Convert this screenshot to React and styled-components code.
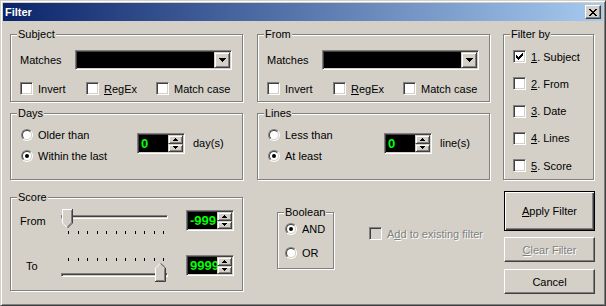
import React from "react";
import styled, { createGlobalStyle } from "styled-components";

const GlobalStyle = createGlobalStyle`
  html, body {
    margin: 0;
    padding: 0;
    background: #d4d0c8;
  }
  body {
    font-family: "Liberation Sans", Arial, sans-serif;
    font-size: 11px;
    color: #000;
  }
  * {
    box-sizing: border-box;
  }
`;

const Window = styled.div`
  width: 606px;
  height: 306px;
  background: #d4d0c8;
  border: 1px solid;
  border-color: #d4d0c8 #404040 #404040 #d4d0c8;
  box-shadow: inset 1px 1px 0 #fff, inset -1px -1px 0 #808080;
  padding: 2px;
  display: flex;
  flex-direction: column;
`;

const TitleBar = styled.div`
  height: 18px;
  flex: none;
  background: linear-gradient(to right, #0a246a, #a6caf0);
  display: flex;
  align-items: center;
  justify-content: space-between;
  padding: 0 2px;
`;

const Title = styled.span`
  color: #fff;
  font-weight: bold;
  line-height: 13px;
`;

const CloseButton = styled.div`
  width: 16px;
  height: 14px;
  background: #d4d0c8;
  border: 1px solid;
  border-color: #fff #404040 #404040 #fff;
  box-shadow: inset -1px -1px 0 #808080;
  display: flex;
  align-items: center;
  justify-content: center;
`;

const Body = styled.div`
  padding: 13px 8px 0 7px;
  display: flex;
  flex-direction: column;
`;

const TopGrid = styled.div`
  display: grid;
  grid-template-columns: 233px 14px 233px 13px 91px;
  grid-template-rows: 68px 67px;
  row-gap: 11px;
`;

const Group = styled.div`
  position: relative;
  border: 1px solid #808080;
  box-shadow: 1px 1px 0 #fff, inset 1px 1px 0 #fff;
  grid-column: ${(p) => p.$col || "auto"};
  grid-row: ${(p) => p.$row || "auto"};
  width: ${(p) => (p.$w ? `${p.$w}px` : "auto")};
  height: ${(p) => (p.$h ? `${p.$h}px` : "auto")};
  margin: ${(p) => p.$m || "0"};
  padding: ${(p) => p.$pad || "0"};
  flex: none;
`;

const GroupTitle = styled.span`
  position: absolute;
  top: -7px;
  left: 6px;
  padding: 0 1px;
  line-height: 13px;
  background: #d4d0c8;
  white-space: nowrap;
`;

const Row = styled.div`
  display: flex;
  align-items: ${(p) => p.$align || "center"};
  height: ${(p) => (p.$h ? `${p.$h}px` : "auto")};
  margin-top: ${(p) => p.$mt || 0}px;
`;

const Label = styled.span`
  width: ${(p) => p.$w}px;
  padding-left: ${(p) => p.$pl || 0}px;
  margin-top: ${(p) => p.$mt || 0}px;
  line-height: 13px;
  flex: none;
  white-space: nowrap;
`;

const Combo = styled.div`
  width: 157px;
  height: 20px;
  border: 1px solid;
  border-color: #808080 #fff #fff #808080;
  box-shadow: inset 1px 1px 0 #404040, inset -1px -1px 0 #d4d0c8;
  background: #000;
  padding: 1px;
  display: flex;
  justify-content: flex-end;
`;

const RaisedButton = styled.div`
  background: #d4d0c8;
  border: 1px solid;
  border-color: #d4d0c8 #404040 #404040 #d4d0c8;
  box-shadow: inset 1px 1px 0 #fff, inset -1px -1px 0 #808080;
  display: flex;
  align-items: center;
  justify-content: center;
`;

const DropButton = styled(RaisedButton)`
  width: 16px;
  height: 16px;
`;

const Item = styled.label`
  display: flex;
  align-items: center;
  gap: 5px;
  width: ${(p) => (p.$w ? `${p.$w}px` : "auto")};
  height: ${(p) => p.$h || 13}px;
  flex: none;
  white-space: nowrap;
  color: ${(p) => (p.$disabled ? "#808080" : "#000")};
  text-shadow: ${(p) => (p.$disabled ? "1px 1px 0 #fff" : "none")};
`;

const Box = styled.span`
  width: 13px;
  height: 13px;
  flex: none;
  border: 1px solid;
  border-color: #808080 #fff #fff #808080;
  box-shadow: inset 1px 1px 0 #404040, inset -1px -1px 0 #d4d0c8;
  background: ${(p) => (p.$disabled ? "#d4d0c8" : "#fff")};
  display: flex;
  align-items: center;
  justify-content: center;
`;

const RadioOuter = styled.span`
  width: 12px;
  height: 12px;
  flex: none;
  border-radius: 50%;
  border: 1px solid;
  border-color: #808080 #fff #fff #808080;
  display: flex;
`;

const RadioInner = styled.span`
  flex: 1;
  border-radius: 50%;
  border: 1px solid;
  border-color: #404040 #d4d0c8 #d4d0c8 #404040;
  background: #fff;
  display: flex;
  align-items: center;
  justify-content: center;
`;

const Dot = styled.span`
  width: 4px;
  height: 4px;
  border-radius: 50%;
  background: #000;
`;

const Column = styled.div`
  display: flex;
  flex-direction: column;
  width: ${(p) => (p.$w ? `${p.$w}px` : "auto")};
  gap: ${(p) => p.$gap || 0}px;
  margin: ${(p) => p.$m || "0"};
  flex: none;
`;

const Spin = styled.div`
  width: 48px;
  height: 21px;
  flex: none;
  margin-top: ${(p) => p.$mt || 0}px;
  border: 1px solid;
  border-color: #808080 #fff #fff #808080;
  box-shadow: inset 1px 1px 0 #404040, inset -1px -1px 0 #d4d0c8;
  background: #000;
  padding: 1px;
  display: flex;
`;

const SpinValue = styled.span`
  flex: 1;
  min-width: 0;
  overflow: hidden;
  white-space: nowrap;
  color: #00ff00;
  font-weight: bold;
  font-size: 13px;
  line-height: 17px;
  padding-left: 2px;
`;

const SpinButtons = styled.div`
  width: 15px;
  flex: none;
  display: flex;
  flex-direction: column;
`;

const SpinButton = styled(RaisedButton)`
  flex: 1;
`;

const SliderBox = styled.div`
  position: relative;
  width: 110px;
  height: ${(p) => p.$h}px;
  margin-top: ${(p) => p.$mt || 0}px;
  flex: none;
  display: flex;
  flex-direction: column;
`;

const Track = styled.div`
  width: 107px;
  height: 4px;
  margin-left: 1px;
  margin-top: ${(p) => p.$mt}px;
  border: 1px solid;
  border-color: #808080 #fff #fff #808080;
  box-shadow: inset 1px 1px 0 #404040;
  background: #d4d0c8;
`;

const Ticks = styled.div`
  width: 96px;
  height: 3px;
  margin-left: 8px;
  margin-top: ${(p) => p.$mt}px;
  display: flex;
  justify-content: space-between;
`;

const Tick = styled.span`
  width: 1px;
  height: 3px;
  background: #000;
`;

const Thumb = styled.svg`
  position: absolute;
  left: ${(p) => p.$x}px;
  top: ${(p) => p.$y}px;
`;

const ButtonColumn = styled.div`
  margin-left: auto;
  width: 91px;
  display: flex;
  flex-direction: column;
  gap: 6px;
`;

const Button = styled.div`
  height: ${(p) => p.$h}px;
  display: flex;
  align-items: center;
  justify-content: center;
  background: #d4d0c8;
  border: 1px solid;
  border-color: ${(p) => (p.$default ? "#000" : "#fff #404040 #404040 #fff")};
  box-shadow: ${(p) =>
    p.$default
      ? "inset 1px 1px 0 #fff, inset -1px -1px 0 #404040, inset -2px -2px 0 #808080"
      : "inset -1px -1px 0 #808080"};
  color: ${(p) => (p.$disabled ? "#808080" : "#000")};
  text-shadow: ${(p) => (p.$disabled ? "1px 1px 0 #fff" : "none")};
  margin-top: ${(p) => p.$mt || 0}px;
`;

const BottomRow = styled.div`
  display: flex;
  align-items: flex-start;
  margin-top: 11px;
`;

const CloseGlyph = () => (
  <svg width="8" height="7" viewBox="0 0 8 7" shapeRendering="crispEdges">
    <path
      fill="#000"
      d="M0 0h2v1H0zM6 0h2v1H6zM1 1h2v1H1zM5 1h2v1H5zM2 2h4v1H2zM3 3h2v1H3zM2 4h4v1H2zM1 5h2v1H1zM5 5h2v1H5zM0 6h2v1H0zM6 6h2v1H6z"
    />
  </svg>
);

const CheckMark = () => (
  <svg width="7" height="7" viewBox="0 0 7 7" shapeRendering="crispEdges">
    {[2, 3, 4, 3, 2, 1, 0].map((y, x) => (
      <rect key={x} x={x} y={y} width="1" height="3" fill="#000" />
    ))}
  </svg>
);

const Arrow = ({ dir, w }) => {
  const rows = [];
  const h = Math.ceil(w / 2);
  for (let i = 0; i < h; i++) {
    const y = dir === "up" ? h - 1 - i : i;
    rows.push(<rect key={i} x={i} y={y} width={w - 2 * i} height="1" fill="#000" />);
  }
  return (
    <svg width={w} height={h} viewBox={`0 0 ${w} ${h}`} shapeRendering="crispEdges">
      {rows}
    </svg>
  );
};

const CheckBox = ({ checked, disabled, children, w }) => (
  <Item $w={w} $disabled={disabled}>
    <Box $disabled={disabled}>{checked && <CheckMark />}</Box>
    <span>{children}</span>
  </Item>
);

const Radio = ({ checked, children, h }) => (
  <Item $h={h}>
    <RadioOuter>
      <RadioInner>{checked && <Dot />}</RadioInner>
    </RadioOuter>
    <span>{children}</span>
  </Item>
);

const SpinBox = ({ value, mt }) => (
  <Spin $mt={mt}>
    <SpinValue>{value}</SpinValue>
    <SpinButtons>
      <SpinButton>
        <Arrow dir="up" w={5} />
      </SpinButton>
      <SpinButton>
        <Arrow dir="down" w={5} />
      </SpinButton>
    </SpinButtons>
  </Spin>
);

const TickRow = ({ mt }) => (
  <Ticks $mt={mt}>
    {Array.from({ length: 11 }).map((_, i) => (
      <Tick key={i} />
    ))}
  </Ticks>
);

const ThumbDown = ({ x }) => (
  <Thumb $x={x} $y={0} width="11" height="20" viewBox="0 0 11 20">
    <polygon points="0,0 11,0 11,14 5.5,19.5 0,14" fill="#d4d0c8" />
    <polyline points="0.5,14 0.5,0.5 10,0.5" fill="none" stroke="#fff" />
    <polyline points="0.5,14 5,18.5" fill="none" stroke="#fff" />
    <polyline points="10.5,0 10.5,14 5.5,19" fill="none" stroke="#404040" />
    <polyline points="9.5,1 9.5,13.6 5.5,17.6" fill="none" stroke="#808080" />
  </Thumb>
);

const ThumbUp = ({ x }) => (
  <Thumb $x={x} $y={5} width="11" height="19" viewBox="0 0 11 19">
    <polygon points="0,18.5 0,5 5.5,0 11,5 11,18.5" fill="#d4d0c8" />
    <polyline points="0.5,18 0.5,5 5.5,0.2" fill="none" stroke="#fff" />
    <polyline points="5.5,0.2 10.5,5 10.5,18.5 0,18.5" fill="none" stroke="#404040" />
    <polyline points="9.5,5.5 9.5,17.5 1,17.5" fill="none" stroke="#808080" />
  </Thumb>
);

const MatchGroup = ({ title, col }) => (
  <Group $col={col} $row="1" $pad="15px 0 0 9px">
    <GroupTitle>{title}</GroupTitle>
    <Row $h={20}>
      <Label $w={55}>Matches</Label>
      <Combo>
        <DropButton>
          <Arrow dir="down" w={7} />
        </DropButton>
      </Combo>
    </Row>
    <Row $mt={12}>
      <CheckBox w={66}>Invert</CheckBox>
      <CheckBox w={70}>
        <u>R</u>egEx
      </CheckBox>
      <CheckBox>Match case</CheckBox>
    </Row>
  </Group>
);

const RangeGroup = ({ title, col, first, second, unit }) => (
  <Group $col={col} $row="2" $pad="10px 0 0 10px">
    <GroupTitle>{title}</GroupTitle>
    <Row $align="flex-start">
      <Column $w={116}>
        <Radio h={21}>{first}</Radio>
        <Radio h={21} checked>
          {second}
        </Radio>
      </Column>
      <Row $mt={9}>
        <SpinBox value="0" />
        <Label $pl={8}>{unit}</Label>
      </Row>
    </Row>
  </Group>
);

export default function App() {
  return (
    <>
      <GlobalStyle />
      <Window>
        <TitleBar>
          <Title>Filter</Title>
          <CloseButton>
            <CloseGlyph />
          </CloseButton>
        </TitleBar>
        <Body>
          <TopGrid>
            <MatchGroup title="Subject" col="1" />
            <MatchGroup title="From" col="3" />
            <RangeGroup title="Days" col="1" first="Older than" second="Within the last" unit="day(s)" />
            <RangeGroup title="Lines" col="3" first="Less than" second="At least" unit="line(s)" />
            <Group $col="5" $row="1 / 3" $pad="15px 0 0 9px">
              <GroupTitle>Filter by</GroupTitle>
              <Column $gap={14.3}>
                <CheckBox checked>
                  <u>1</u>. Subject
                </CheckBox>
                <CheckBox>
                  <u>2</u>. From
                </CheckBox>
                <CheckBox>
                  <u>3</u>. Date
                </CheckBox>
                <CheckBox>
                  <u>4</u>. Lines
                </CheckBox>
                <CheckBox>
                  <u>5</u>. Score
                </CheckBox>
              </Column>
            </Group>
          </TopGrid>

          <BottomRow>
            <Group $w={233} $h={94} $m="6px 0 0 0" $pad="11px 0 0 9px">
              <GroupTitle>Score</GroupTitle>
              <Row $align="flex-start">
                <Label $w={40} $mt={6}>
                  From
                </Label>
                <SliderBox $h={26}>
                  <Track $mt={6} />
                  <TickRow mt={12} />
                  <ThumbDown x={2} />
                </SliderBox>
                <Column $m="1px 0 0 16px">
                  <SpinBox value="-999" />
                </Column>
              </Row>
              <Row $align="flex-start" $mt={20}>
                <Label $w={40} $pl={6} $mt={5}>
                  To
                </Label>
                <SliderBox $h={22} $mt={3}>
                  <TickRow mt={0} />
                  <Track $mt={12} />
                  <ThumbUp x={95} />
                </SliderBox>
                <Column $m="0 0 0 16px">
                  <SpinBox value="9999" />
                </Column>
              </Row>
            </Group>

            <Group $w={57} $h={57} $m="21px 0 0 34px" $pad="4px 0 0 7px">
              <GroupTitle>Boolean</GroupTitle>
              <Radio h={24} checked>
                AND
              </Radio>
              <Radio h={24}>OR</Radio>
            </Group>

            <Column $m="36px 0 0 35px">
              <CheckBox disabled>
                A<u>d</u>d to existing filter
              </CheckBox>
            </Column>

            <ButtonColumn>
              <Button $h={40} $default>
                <span>
                  <u>A</u>pply Filter
                </span>
              </Button>
              <Button $h={25} $disabled>
                <span>
                  <u>C</u>lear Filter
                </span>
              </Button>
              <Button $h={25} $mt={1}>
                Cancel
              </Button>
            </ButtonColumn>
          </BottomRow>
        </Body>
      </Window>
    </>
  );
}
